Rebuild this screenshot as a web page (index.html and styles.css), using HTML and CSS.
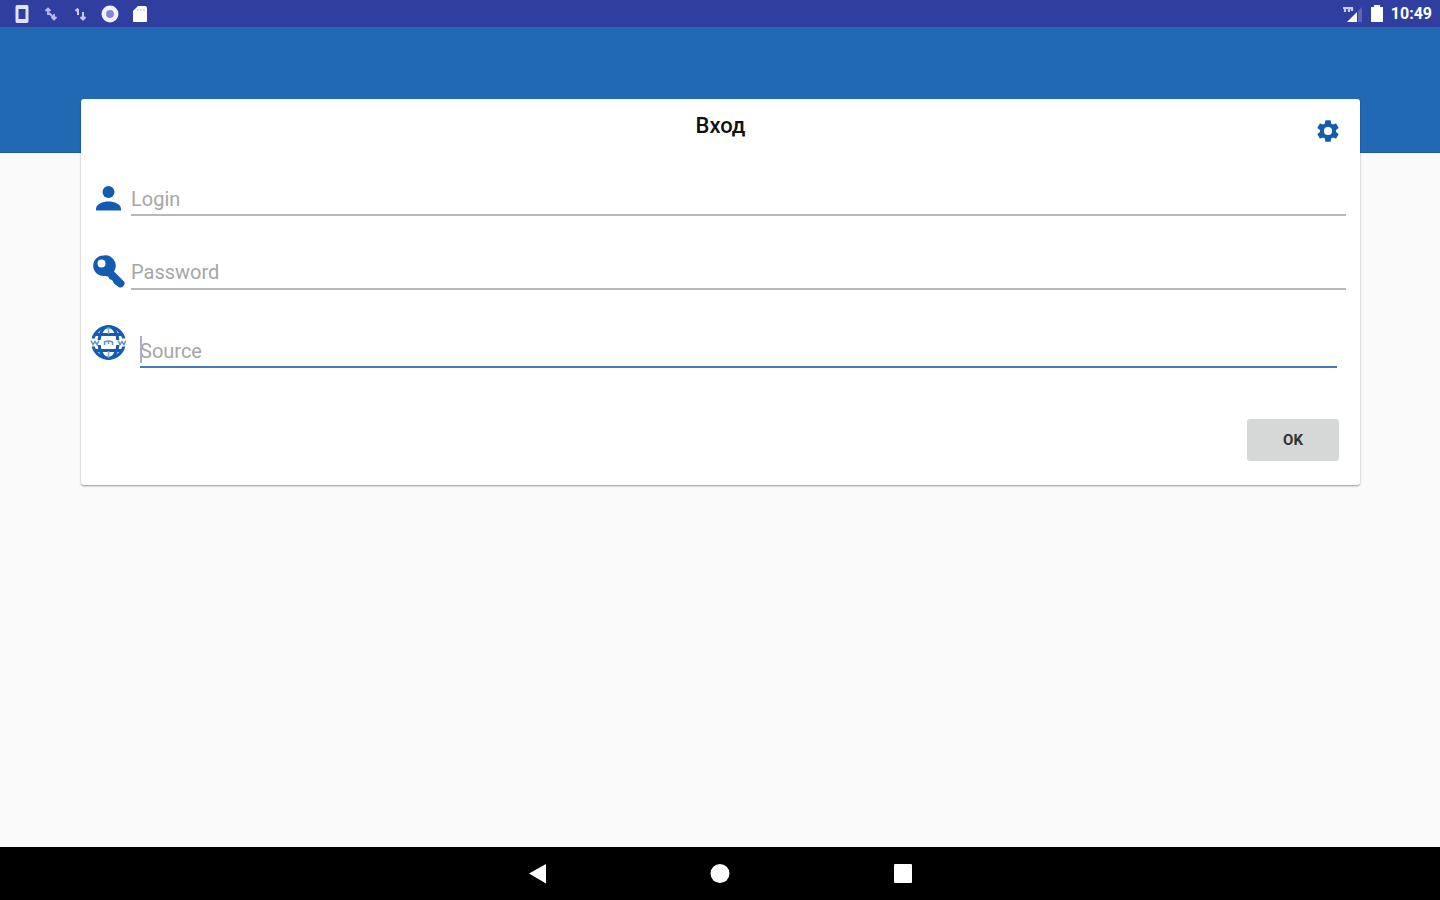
FILE: index.html
```html
<!DOCTYPE html>
<html lang="ru">
<head>
<meta charset="utf-8">
<title>Вход</title>
<link rel="stylesheet" href="styles.css">
</head>
<body>
<div class="status">
  <div class="status-group notices">
    <svg width="16" height="20" viewBox="0 0 16 20"><path fill="#dfe1f6" fill-rule="evenodd" d="M3 1h10q1.500 0 1.500 2v14q0 2-1.500 2H3q-1.500 0-1.500-2V3q0-2 1.500-2zm1.500 4v10h7V5z"/></svg>
    <svg width="16" height="20" viewBox="0 0 16 20"><path d="M5 11V5M2.500 7 5 4.500 7.500 7M11 10v5M8.500 13l2.500 2.500 2.500-2.500M6 9l4 4" fill="none" stroke="#b9bce6" stroke-width="1.800"/></svg>
    <svg width="16" height="20" viewBox="0 0 16 20"><path d="M6 11V5M3.500 7 6 4.500M11 8v7M8.500 13l2.500 2.500 2.500-2.500" fill="none" stroke="#c9ccef" stroke-width="2"/></svg>
    <svg width="18" height="20" viewBox="0 0 18 20"><circle cx="9" cy="10" r="6.200" fill="#8088d2" stroke="#f0f1fc" stroke-width="4.500"/></svg>
    <svg width="16" height="20" viewBox="0 0 16 20"><path d="M6 2h7q2 0 2 2v13q0 1-1 1H2q-1 0-1-1V7z" fill="#fff"/><path d="M6 5v2M9 5v2M12 5v2" stroke="#b5b9e0"/></svg>
  </div>
  <div class="status-group">
    <svg width="22" height="20" viewBox="0 0 22 20"><path d="M5 18 15 8v10z" fill="#fff"/><path d="M16 7l4-4v15h-4z" fill="#5c65bd"/><path d="M1 4h10M3 4v4M7 4v4M10 4v3" fill="none" stroke="#c9ccef" stroke-width="2.200"/></svg>
    <svg class="battery" width="12" height="20" viewBox="0 0 12 20"><path d="M3 1h6v2h3v15H0V3h3z" fill="#fff"/></svg>
    <time class="clock">10:49</time>
  </div>
</div>
<header class="banner"></header>
<main class="content">
  <form class="card">
    <div class="card-head">
      <h1 class="title">Вход</h1>
      <button class="settings" type="button" aria-label="Settings">
        <svg width="26" height="26" viewBox="0 0 24 24"><path fill="#145caf" d="M19.430 12.980c.04-.32.07-.64.07-.98s-.03-.66-.07-.98l2.110-1.650c.19-.15.24-.42.12-.64l-2-3.460c-.12-.22-.39-.3-.61-.22l-2.490 1c-.52-.4-1.080-.73-1.690-.98l-.38-2.650C14.460 2.180 14.250 2 14 2h-4c-.25 0-.46.18-.49.42l-.38 2.650c-.61.25-1.170.59-1.690.98l-2.490-1c-.23-.09-.49 0-.61.22l-2 3.460c-.13.22-.07.49.12.64l2.110 1.650c-.04.32-.07.65-.07.98s.03.66.07.98l-2.110 1.650c-.19.15-.24.42-.12.64l2 3.460c.12.22.39.3.61.22l2.490-1c.52.4 1.080.73 1.690.98l.38 2.650c.03.24.24.42.49.42h4c.25 0 .46-.18.49-.42l.38-2.650c.61-.25 1.170-.59 1.690-.98l2.490 1c.23.09.49 0 .61-.22l2-3.460c.12-.22.07-.49-.12-.64zM12 15.800a3.800 3.800 0 1 1 0-7.600 3.800 3.800 0 0 1 0 7.600z"/></svg>
      </button>
    </div>
    <div class="fields">
      <div class="row">
        <label for="login" aria-label="Login"><svg width="36" height="36" viewBox="0 0 36 36" fill="#145caf"><circle cx="18.500" cy="11" r="6"/><path d="M6 29.500v-1.500c0-5 6.500-7.500 12.500-7.500S31 23 31 28v1.500z"/></svg></label>
        <div class="box"><input class="field" id="login" type="text" placeholder="Login"></div>
      </div>
      <div class="row">
        <label for="password" aria-label="Password"><svg width="36" height="36" viewBox="0 0 36 36"><path fill="#145caf" fill-rule="evenodd" d="M13.500 2.500a10.300 10.300 0 1 0 2 20.400l2.500.600 1.500 2.500 3 1.500 1.500 3 4.500 3.500q3 1.500 5-1t.500-4.500L24 18.500A10.500 10.500 0 0 0 13.500 2.500zM11.500 6.500a4 4 0 1 1 0 8 4 4 0 0 1 0-8z"/></svg></label>
        <div class="box"><input class="field password" id="password" type="password" placeholder="Password"></div>
      </div>
      <div class="row">
        <label for="source" aria-label="Source"><svg width="36" height="36" viewBox="0 0 36 36"><g fill="none" stroke="#145caf" stroke-width="3"><circle cx="18.500" cy="17.500" r="15.800"/><ellipse cx="18.500" cy="17.500" rx="9.500" ry="16"/><path d="M5 9.500h27M5 25.500h27"/><path d="M18.500 2v7M18.500 26v7" stroke-width="1.500" stroke="#7ba5d4"/></g><path fill="#fff" d="M0 13.500h5v8H0zM32 13.500h4v8h-4zM5 15h27v5H5z"/><path d="M1 15.500l2 4 2-3 2 3 2-4M14.500 20v-3q4-2 8 0v3M18.500 17v2M28 15.500l2 4 2-3 2 3 2-4" fill="none" stroke="#5f93ca" stroke-width="1.500"/></svg></label>
        <div class="box source-box"><input class="field source" id="source" type="text" placeholder="Source"><span class="caret"></span></div>
      </div>
    </div>
    <div class="actions"><button class="ok" type="submit">OK</button></div>
  </form>
</main>
<nav class="navbar">
  <button class="nav" type="button" aria-label="Back"><svg width="20" height="22" viewBox="0 0 20 22"><path d="M2 10.500 19 1v19.500z" fill="#fff"/></svg></button>
  <button class="nav" type="button" aria-label="Home"><svg width="20" height="22" viewBox="0 0 20 22"><circle cx="10" cy="10.500" r="9.500" fill="#fff"/></svg></button>
  <button class="nav" type="button" aria-label="Recent apps"><svg width="20" height="22" viewBox="0 0 20 22"><rect x="1" y="1" width="18" height="19" rx="1" fill="#fff"/></svg></button>
</nav>
</body>
</html>
```
FILE: styles.css
```css
* { box-sizing: border-box; }
body {
  margin: 0;
  min-height: 100vh;
  display: flex;
  flex-direction: column;
  background: #fafafa;
  font-family: Roboto, "Noto Sans", sans-serif;
}
svg { display: block; }
button { padding: 0; border: 0; background: none; font-family: inherit; cursor: pointer; }
.status {
  display: flex;
  justify-content: space-between;
  align-items: center;
  height: 27px;
  padding: 0 8px 0 14px;
  background: #303f9f;
}
.status-group { display: flex; align-items: center; }
.notices { gap: 13px; }
.battery { margin: 0 8px 0 7px; }
.clock { color: #fff; font-size: 16px; font-weight: 700; line-height: 20px; }
.banner { height: 126px; background: #2269b4; border-bottom: 1px solid #165bac; }
.content { flex: 1; margin-top: -54px; padding: 0 80px 32px 81px; }
.card {
  background: #fff;
  border-radius: 3px;
  box-shadow: 0 1px 2px rgba(0, 0, 0, 0.4);
  padding: 0 14px 24px 9px;
}
.card-head {
  display: grid;
  grid-template-columns: 1fr auto 1fr;
  height: 82px;
  padding: 13px 0 0 5px;
  align-items: start;
}
.title { grid-column: 2; margin: 0; font-size: 22px; font-weight: 500; line-height: 28px; color: #111; }
.settings { justify-self: end; margin: 6px 5px 0 0; }
.fields { display: grid; gap: 36px; }
.row { display: grid; grid-template-columns: 36px 1fr; gap: 5px; height: 36px; }
.box { position: relative; }
.field {
  display: block;
  width: 100%;
  height: 35px;
  padding: 2px 0 0;
  border: 0;
  border-bottom: 2px solid #b8b8b8;
  border-radius: 0;
  background: none;
  outline: none;
  font: 400 20px/28px Roboto, "Noto Sans", sans-serif;
  color: #212121;
}
.field::placeholder { color: #a6a6a6; opacity: 1; }
.password { height: 37px; }
.source-box { padding: 8px 9px 0; }
.source { border-bottom-color: #4479bf; }
.caret { position: absolute; left: 9px; top: 11px; width: 2px; height: 27px; background: #a9add6; }
.actions { display: flex; justify-content: flex-end; margin-top: 58px; padding-right: 7px; }
.ok {
  width: 92px;
  height: 42px;
  border-radius: 3px;
  background: #d6d8d7;
  color: #333;
  font-size: 15px;
  font-weight: 700;
}
.navbar {
  display: flex;
  justify-content: center;
  align-items: center;
  gap: 163px;
  height: 53px;
  background: #000;
}
```
